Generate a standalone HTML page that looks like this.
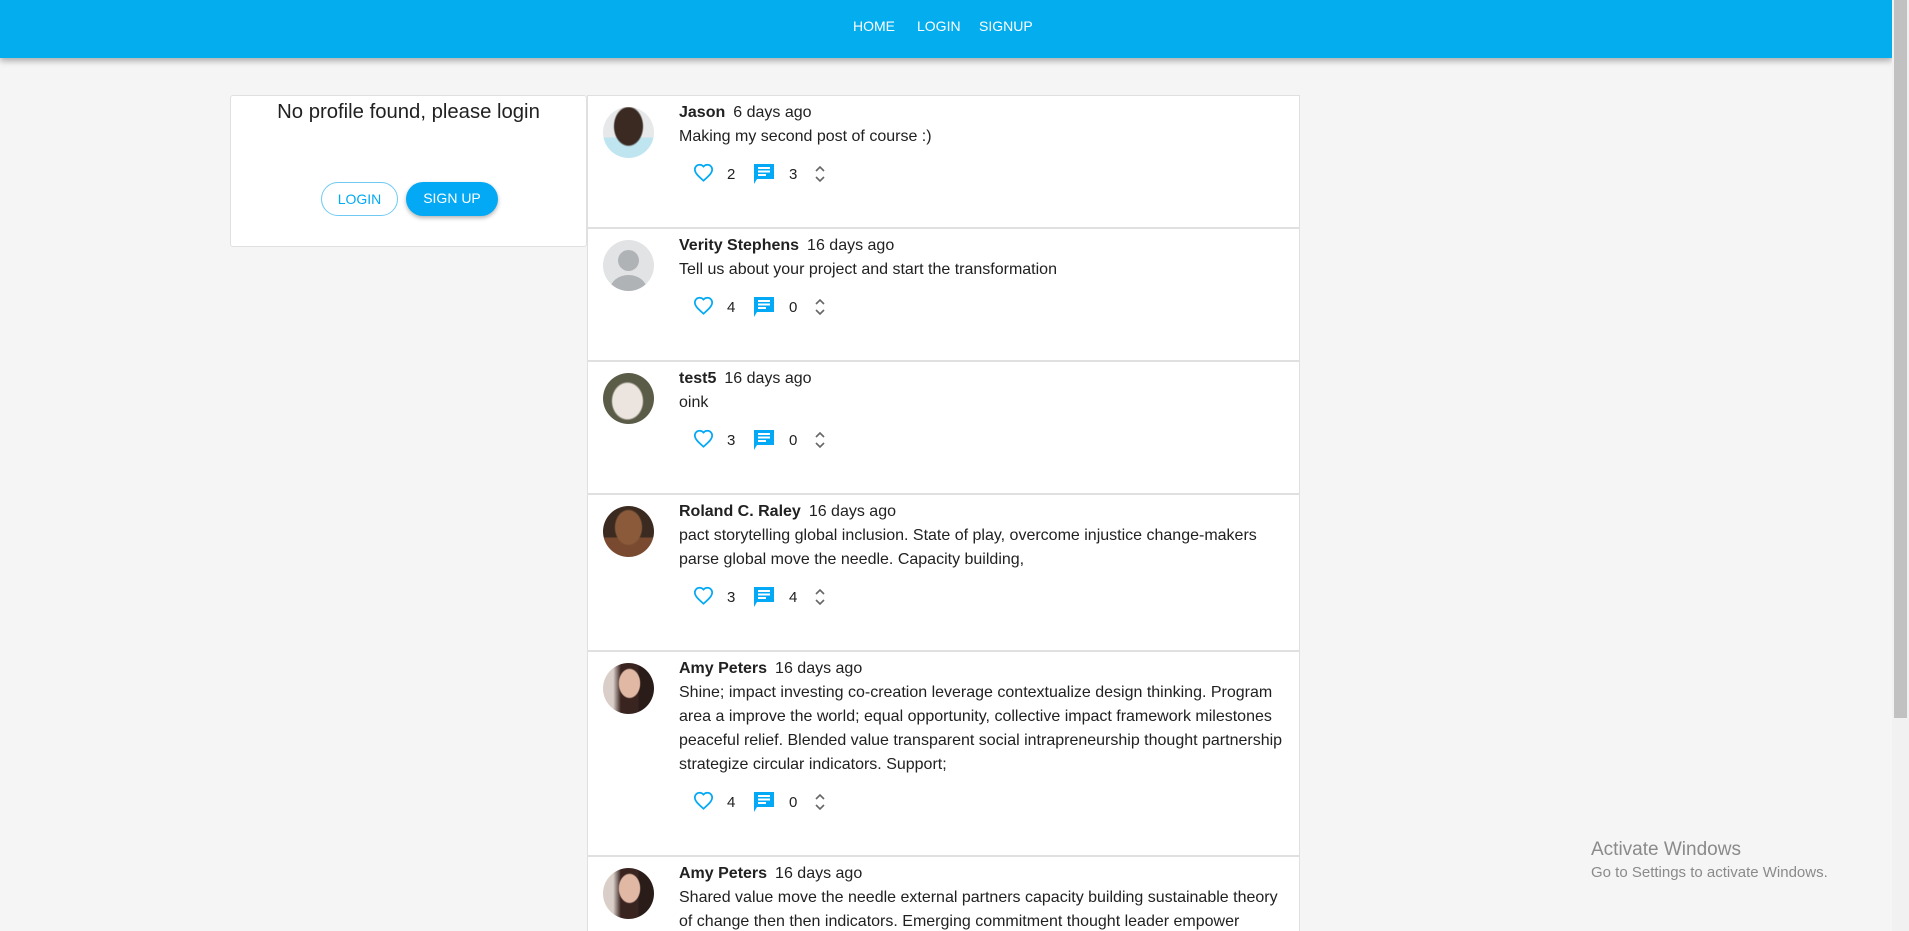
<!DOCTYPE html>
<html style="height:931px;overflow:hidden"><head><meta charset="utf-8"><style>
*{box-sizing:border-box;margin:0;padding:0}
body{width:1909px;height:931px;overflow:hidden;background:#f5f5f5;font-family:"Liberation Sans",Arial,sans-serif;color:#212121;position:relative}
.nav{position:absolute;left:0;top:0;width:1892px;height:58px;background:#03adee;box-shadow:0 3px 6px rgba(0,0,0,.3)}
.nav a{position:absolute;top:18px;color:#fff;font-size:14px;text-decoration:none}
.sb{position:absolute;right:0;top:0;width:17px;height:931px;background:#f1f1f1}
.sb div{position:absolute;left:2px;top:0;width:13px;height:718px;background:#c1c1c1}
.card{position:absolute;left:230px;top:95px;width:357px;height:152px;background:#fff;border:1px solid #e0e0e0;border-radius:3px}
.card h3{font-weight:normal;font-size:20.3px;text-align:center;margin-top:5px}
.btn{position:absolute;top:86px;height:34px;border-radius:17px;font-size:14px;text-align:center;line-height:33px}
.feed{position:absolute;left:587px;top:95px;width:713px;height:840px;overflow:hidden;background:#fff;border:1px solid #e0e0e0;border-bottom:none}
.post{position:relative;border-bottom:2px solid #e0e0e0;padding:5px 0 40px 91px}
.av{position:absolute;left:15px;top:11px;width:51px;height:51px;border-radius:50%;overflow:hidden}
.post p{font-size:16px;line-height:24px;width:615px}
.post b{font-weight:bold;margin-right:8px}
.act{position:relative;height:24px;margin-top:14px;font-size:15px}
.act span{position:absolute;top:3px}
.act svg{position:absolute}
.wm{position:absolute;left:1591px;color:#8a8a8a}
</style></head><body>
<div class="nav"><a style="left:853px">HOME</a><a style="left:917px">LOGIN</a><a style="left:979px">SIGNUP</a></div>
<div class="sb"><div></div></div>
<div class="card"><h3>No profile found, please login</h3>
<div class="btn" style="left:90px;width:77px;border:1px solid #6fcaf3;color:#03a9f4">LOGIN</div>
<div class="btn" style="left:175px;width:92px;background:#03a9f4;color:#fff;box-shadow:0 2px 4px rgba(0,0,0,.3)">SIGN UP</div>
</div>
<div class="feed">
<div class="post"><div class="av" style="background:radial-gradient(ellipse 30% 40% at 50% 38%,#3a2a22 0 90%,transparent 100%),linear-gradient(#e6e8ea 60%,#bfe6f0 60%)"></div>
<p><b>Jason</b>6 days ago</p><p>Making my second post of course :)</p>
<div class="act"><svg style="left:14px;top:0" width="21" height="19" viewBox="0 0 24 22"><path d="M12 20.5l-1.4-1.3C5.4 14.5 2 11.4 2 7.5 2 4.4 4.4 2 7.5 2c1.7 0 3.4.8 4.5 2.1C13.1 2.8 14.8 2 16.5 2 19.6 2 22 4.4 22 7.5c0 3.9-3.4 7-8.6 11.7z" fill="none" stroke="#03a9f4" stroke-width="2"/></svg><span style="left:48px">2</span><svg style="left:75px;top:1px" width="21" height="20" viewBox="0 0 21 20"><path d="M0 0h20v15H3l-3 5z" fill="#03a9f4"/><path d="M4 4h12M4 7.5h12M4 11h8" stroke="#fff" stroke-width="2"/></svg><span style="left:110px">3</span><svg style="left:136px;top:2px" width="10" height="18" viewBox="0 0 10 18"><path d="M1 6l4-4 4 4M1 12l4 4 4-4" fill="none" stroke="#666" stroke-width="1.6"/></svg></div></div>

<div class="post"><div class="av" style="background:#e2e3e5"><div style="position:absolute;left:15px;top:10px;width:21px;height:21px;border-radius:50%;background:#b0b3b6"></div><div style="position:absolute;left:7px;top:35px;width:37px;height:30px;border-radius:50%;background:#b0b3b6"></div></div>
<p><b>Verity Stephens</b>16 days ago</p><p>Tell us about your project and start the transformation</p>
<div class="act"><svg style="left:14px;top:0" width="21" height="19" viewBox="0 0 24 22"><path d="M12 20.5l-1.4-1.3C5.4 14.5 2 11.4 2 7.5 2 4.4 4.4 2 7.5 2c1.7 0 3.4.8 4.5 2.1C13.1 2.8 14.8 2 16.5 2 19.6 2 22 4.4 22 7.5c0 3.9-3.4 7-8.6 11.7z" fill="none" stroke="#03a9f4" stroke-width="2"/></svg><span style="left:48px">4</span><svg style="left:75px;top:1px" width="21" height="20" viewBox="0 0 21 20"><path d="M0 0h20v15H3l-3 5z" fill="#03a9f4"/><path d="M4 4h12M4 7.5h12M4 11h8" stroke="#fff" stroke-width="2"/></svg><span style="left:110px">0</span><svg style="left:136px;top:2px" width="10" height="18" viewBox="0 0 10 18"><path d="M1 6l4-4 4 4M1 12l4 4 4-4" fill="none" stroke="#666" stroke-width="1.6"/></svg></div></div>

<div class="post"><div class="av" style="background:radial-gradient(ellipse 32% 38% at 48% 55%,#ece4de 0 90%,transparent 100%),#5a5c48"></div>
<p><b>test5</b>16 days ago</p><p>oink</p>
<div class="act"><svg style="left:14px;top:0" width="21" height="19" viewBox="0 0 24 22"><path d="M12 20.5l-1.4-1.3C5.4 14.5 2 11.4 2 7.5 2 4.4 4.4 2 7.5 2c1.7 0 3.4.8 4.5 2.1C13.1 2.8 14.8 2 16.5 2 19.6 2 22 4.4 22 7.5c0 3.9-3.4 7-8.6 11.7z" fill="none" stroke="#03a9f4" stroke-width="2"/></svg><span style="left:48px">3</span><svg style="left:75px;top:1px" width="21" height="20" viewBox="0 0 21 20"><path d="M0 0h20v15H3l-3 5z" fill="#03a9f4"/><path d="M4 4h12M4 7.5h12M4 11h8" stroke="#fff" stroke-width="2"/></svg><span style="left:110px">0</span><svg style="left:136px;top:2px" width="10" height="18" viewBox="0 0 10 18"><path d="M1 6l4-4 4 4M1 12l4 4 4-4" fill="none" stroke="#666" stroke-width="1.6"/></svg></div></div>

<div class="post"><div class="av" style="background:radial-gradient(ellipse 28% 36% at 50% 42%,#8a5a3a 0 90%,transparent 100%),linear-gradient(#3a2a20 62%,#7a4a30 62%)"></div>
<p><b>Roland C. Raley</b>16 days ago</p><p>pact storytelling global inclusion. State of play, overcome injustice change-makers parse global move the needle. Capacity building,</p>
<div class="act"><svg style="left:14px;top:0" width="21" height="19" viewBox="0 0 24 22"><path d="M12 20.5l-1.4-1.3C5.4 14.5 2 11.4 2 7.5 2 4.4 4.4 2 7.5 2c1.7 0 3.4.8 4.5 2.1C13.1 2.8 14.8 2 16.5 2 19.6 2 22 4.4 22 7.5c0 3.9-3.4 7-8.6 11.7z" fill="none" stroke="#03a9f4" stroke-width="2"/></svg><span style="left:48px">3</span><svg style="left:75px;top:1px" width="21" height="20" viewBox="0 0 21 20"><path d="M0 0h20v15H3l-3 5z" fill="#03a9f4"/><path d="M4 4h12M4 7.5h12M4 11h8" stroke="#fff" stroke-width="2"/></svg><span style="left:110px">4</span><svg style="left:136px;top:2px" width="10" height="18" viewBox="0 0 10 18"><path d="M1 6l4-4 4 4M1 12l4 4 4-4" fill="none" stroke="#666" stroke-width="1.6"/></svg></div></div>

<div class="post"><div class="av" style="background:radial-gradient(ellipse 22% 30% at 52% 40%,#e0b8a4 0 90%,transparent 100%),linear-gradient(90deg,#d9cfc8 20%,#3a2420 35% 70%,#2a1c18 70%)"></div>
<p><b>Amy Peters</b>16 days ago</p><p>Shine; impact investing co-creation leverage contextualize design thinking. Program area a improve the world; equal opportunity, collective impact framework milestones peaceful relief. Blended value transparent social intrapreneurship thought partnership strategize circular indicators. Support;</p>
<div class="act"><svg style="left:14px;top:0" width="21" height="19" viewBox="0 0 24 22"><path d="M12 20.5l-1.4-1.3C5.4 14.5 2 11.4 2 7.5 2 4.4 4.4 2 7.5 2c1.7 0 3.4.8 4.5 2.1C13.1 2.8 14.8 2 16.5 2 19.6 2 22 4.4 22 7.5c0 3.9-3.4 7-8.6 11.7z" fill="none" stroke="#03a9f4" stroke-width="2"/></svg><span style="left:48px">4</span><svg style="left:75px;top:1px" width="21" height="20" viewBox="0 0 21 20"><path d="M0 0h20v15H3l-3 5z" fill="#03a9f4"/><path d="M4 4h12M4 7.5h12M4 11h8" stroke="#fff" stroke-width="2"/></svg><span style="left:110px">0</span><svg style="left:136px;top:2px" width="10" height="18" viewBox="0 0 10 18"><path d="M1 6l4-4 4 4M1 12l4 4 4-4" fill="none" stroke="#666" stroke-width="1.6"/></svg></div></div>

<div class="post"><div class="av" style="background:radial-gradient(ellipse 22% 30% at 52% 40%,#e0b8a4 0 90%,transparent 100%),linear-gradient(90deg,#d9cfc8 20%,#3a2420 35% 70%,#2a1c18 70%)"></div>
<p><b>Amy Peters</b>16 days ago</p><p>Shared value move the needle external partners capacity building sustainable theory of change then then indicators. Emerging commitment thought leader empower</p></div>
</div>
<div class="wm" style="top:839px;font-size:19px">Activate Windows</div>
<div class="wm" style="top:864px;font-size:15px">Go to Settings to activate Windows.</div>
</body></html>
